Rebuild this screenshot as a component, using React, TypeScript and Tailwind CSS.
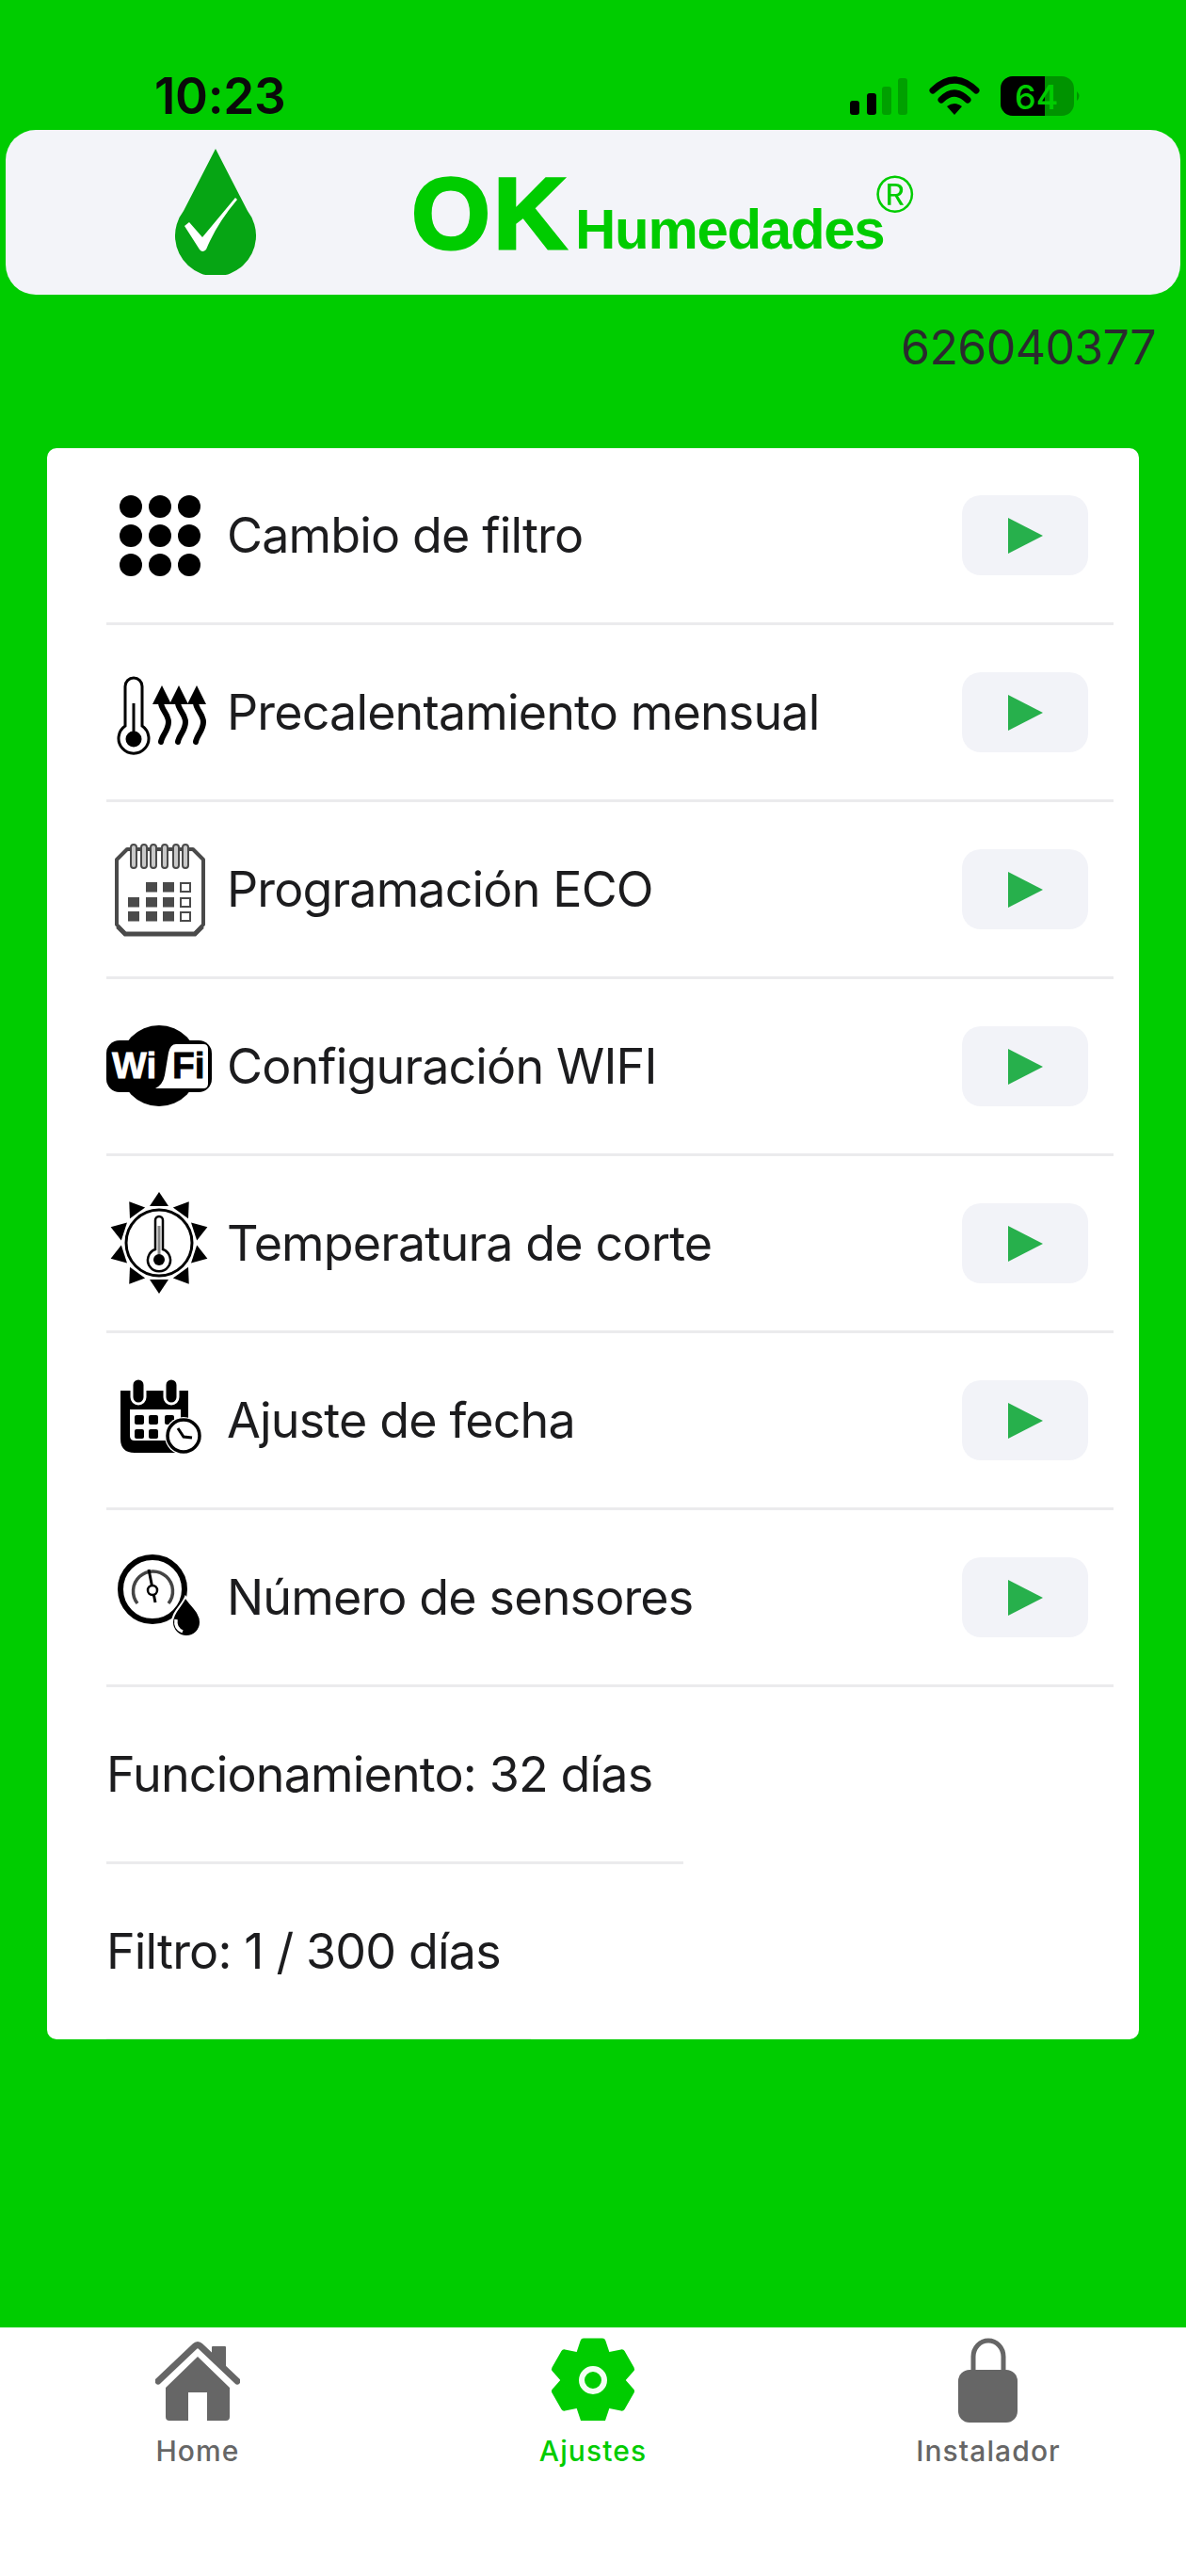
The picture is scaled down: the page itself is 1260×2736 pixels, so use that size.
import React from "react";

const rows = [
  "Cambio de filtro",
  "Precalentamiento mensual",
  "Programación ECO",
  "Configuración WIFI",
  "Temperatura de corte",
  "Ajuste de fecha",
  "Número de sensores",
];

function Dots() {
  const c = [26, 57, 88];
  return (
    <svg width="114" height="114" viewBox="0 0 114 114">
      {c.map((y) => c.map((x) => <circle key={`${x}-${y}`} cx={x} cy={y} r="12" fill="#000" />))}
    </svg>
  );
}

function Thermo() {
  return (
    <svg width="114" height="114" viewBox="0 0 114 114" fill="none">
      <path d="M20 71V29a9 9 0 0 1 18 0V71a16 16 0 1 1-18 0Z" stroke="#000" strokeWidth="3" />
      <path d="M29 47v37" stroke="#000" strokeWidth="3" />
      <circle cx="29" cy="85" r="8.5" fill="#000" />
      {[59, 77, 96].map((x) => (
        <g key={x}>
          <path d={`M${x - 10} 48 L${x} 28 L${x + 10} 48Z`} fill="#000" />
          <path d={`M${x - 1} 46c0 8 8 12 8 21s-7 14-8 21`} stroke="#000" strokeWidth="6" strokeLinecap="round" />
        </g>
      ))}
    </svg>
  );
}

function Calendar() {
  const cols = [23, 42, 60, 78];
  const ys = [49, 65, 80];
  const cells: [number, number, boolean][] = [];
  ys.forEach((y, r) =>
    cols.forEach((x, c) => {
      if (!(r === 0 && c === 0)) cells.push([x, y, c === 3]);
    }),
  );
  return (
    <svg width="114" height="114" viewBox="0 0 114 114" fill="none">
      <path d="M22 14h70l11 11v69l-9 10H20l-9-10V25Z" fill="#fff" stroke="#4a4a4a" strokeWidth="4" strokeLinejoin="round" />
      <path d="M12 96l8 8h74l8-8" stroke="#4a4a4a" strokeWidth="5" />
      {[29, 40, 50, 62, 74, 84].map((x) => (
        <rect key={x} x={x - 3} y="9" width="6" height="25" rx="3" fill="#c9c9c9" stroke="#4a4a4a" strokeWidth="2" />
      ))}
      {cells.map(([x, y, o]) =>
        o ? (
          <rect key={`${x}-${y}`} x={x + 1} y={y + 1} width="10" height="9" fill="#fff" stroke="#4a4a4a" strokeWidth="2" />
        ) : (
          <rect key={`${x}-${y}`} x={x} y={y} width="12" height="10.5" fill="#4a4a4a" />
        ),
      )}
    </svg>
  );
}

function Wifi() {
  return (
    <svg width="114" height="114" viewBox="0 0 114 114">
      <ellipse cx="56" cy="56" rx="42" ry="43" fill="#000" />
      <rect x="0" y="29" width="112" height="55" rx="14" fill="#000" />
      <path d="M74 33H103Q108 33 108 38V75Q108 80 103 80H52Q60 76 62 66L66 42Q68 33 74 33Z" fill="#fff" />
      <text x="6" y="69" fontFamily="'Liberation Sans', sans-serif" fontWeight="700" fontSize="39" fill="#fff" stroke="#fff" strokeWidth="0.8">Wi</text>
      <text x="70" y="69" fontFamily="'Liberation Sans', sans-serif" fontWeight="700" fontSize="39" fill="#000" stroke="#000" strokeWidth="0.8">Fi</text>
    </svg>
  );
}

function Sun() {
  const rays = [0, 1, 2, 3, 4, 5, 6, 7, 8, 9];
  return (
    <svg width="114" height="114" viewBox="0 0 114 114" fill="none">
      {rays.map((i) => (
        <path key={i} d="M56 2 L66 17 L46 17Z" fill="#000" transform={`rotate(${i * 36} 56 56)`} />
      ))}
      <circle cx="56" cy="56" r="35" fill="#fff" stroke="#000" strokeWidth="3" />
      <path d="M52 63V32a4 4 0 0 1 8 0V63a12 12 0 1 1-8 0Z" stroke="#000" strokeWidth="2.5" />
      <path d="M56 38v32" stroke="#888" strokeWidth="3" />
      <circle cx="56" cy="74" r="6" fill="#000" />
    </svg>
  );
}

function DateIcon() {
  return (
    <svg width="114" height="114" viewBox="0 0 114 114" fill="none">
      <path d="M15 25H87V70H80V91H30Q15 91 15 76Z" fill="#000" />
      <path d="M25 45H79V78H30Q25 78 25 73Z" fill="#fff" />
      {[34, 69].map((x) => (
        <rect key={x} x={x - 7} y="12" width="14" height="27" rx="7" fill="#000" stroke="#fff" strokeWidth="3" />
      ))}
      {[30, 45, 62].map((x) => (
        <rect key={`a${x}`} x={x} y="51" width="10" height="10" rx="2" fill="#000" />
      ))}
      {[30, 45].map((x) => (
        <rect key={`b${x}`} x={x} y="66" width="10" height="10" rx="2" fill="#000" />
      ))}
      <circle cx="82" cy="73" r="20" fill="#fff" />
      <circle cx="82" cy="73" r="17" fill="#fff" stroke="#000" strokeWidth="3.5" />
      <path d="M76 65l6 9 9 1" stroke="#000" strokeWidth="3" />
    </svg>
  );
}

function Sensor() {
  return (
    <svg width="114" height="114" viewBox="0 0 114 114" fill="none">
      <circle cx="49" cy="48" r="34" stroke="#000" strokeWidth="6" />
      <path d="M33 63a21 21 0 1 1 33 0" stroke="#444" strokeWidth="3.5" />
      <path d="M45 27l7 35" stroke="#000" strokeWidth="3" />
      <circle cx="49" cy="49" r="5" fill="#fff" stroke="#000" strokeWidth="2.5" />
      <path d="M84 56c6 10 16 16 16 27a15 15 0 0 1-30 0c0-11 10-17 14-27Z" fill="#000" stroke="#fff" strokeWidth="2" />
      <path d="M74 80c-1 7 2 11 7 13" stroke="#fff" strokeWidth="3.5" />
    </svg>
  );
}

const icons = [Dots, Thermo, Calendar, Wifi, Sun, DateIcon, Sensor];

function Row({ label, Icon }: { label: string; Icon: () => React.ReactElement }) {
  return (
    <div className="mr-[27px] flex h-[188px] shrink-0 items-center border-b-[3px] border-[#ebebed] pr-[27px]">
      <div className="flex w-[128px] shrink-0 items-center justify-start">
        <Icon />
      </div>
      <span className="flex-1 text-[52px] tracking-[-0.85px] text-[#1c1c1e]">{label}</span>
      <button className="flex h-[85px] w-[134px] items-center justify-center rounded-[20px] bg-[#f2f3f8]">
        <svg width="40" height="40" viewBox="0 0 40 40">
          <path d="M2 1 L39 20 L2 39Z" fill="#27b04c" />
        </svg>
      </button>
    </div>
  );
}

function Home() {
  return (
    <svg width="90" height="90" viewBox="0 0 90 90" fill="#666">
      <path d="M60 12q0-1 1-1h13q1 0 1 1v24l-15-14Z" />
      <path d="M3 48 L42 11 Q45 8 48 11 L87 48" fill="none" stroke="#666" strokeWidth="7" strokeLinecap="round" />
      <path d="M45 22 L79 55 V86q0 4-4 4H55V60H35V90H15q-4 0-4-4V55Z" />
    </svg>
  );
}

function Gear() {
  const teeth = [0, 60, 120, 180, 240, 300];
  return (
    <svg width="90" height="90" viewBox="0 0 90 90">
      {teeth.map((r) => (
        <path key={r} d="M29 24L35 6H55L61 24Z" fill="#00cc00" stroke="#00cc00" strokeWidth="7" strokeLinejoin="round" transform={`rotate(${r} 45 47)`} />
      ))}
      <circle cx="45" cy="47" r="31" fill="#00cc00" />
      <circle cx="45" cy="47" r="12" fill="none" stroke="#f2fff2" strokeWidth="6" />
    </svg>
  );
}

function Lock() {
  return (
    <svg width="90" height="94" viewBox="0 0 90 94" fill="none">
      <path d="M29 40V24a16 17 0 0 1 32 0V40" stroke="#666" strokeWidth="5" />
      <rect x="13" y="38" width="63" height="56" rx="12" fill="#666" />
    </svg>
  );
}

function Tab({ icon, label, active }: { icon: React.ReactNode; label: string; active?: boolean }) {
  return (
    <div className="flex flex-1 flex-col items-center">
      <div className="flex h-[92px] items-center justify-center">{icon}</div>
      <span className={`mt-[13px] text-[30px] font-medium leading-[36px] tracking-[1.1px] ${active ? "text-[#00cc00]" : "text-[#666666]"}`}>{label}</span>
    </div>
  );
}

export default function App() {
  return (
    <div className="flex h-[2736px] w-[1260px] flex-col overflow-hidden bg-[#00cc00] font-['Inter','Liberation_Sans',sans-serif]">
      <div className="flex h-[138px] shrink-0 items-end justify-between pb-[6px] pl-[164px] pr-[111px]">
        <span className="text-[53px] font-semibold leading-[60px] tracking-[-0.3px] text-[#0a0a0a]">10:23</span>
        <svg width="246" height="50" viewBox="0 0 246 50" className="mb-[3px]">
          <rect x="0" y="28" width="10" height="15" rx="3" fill="#000" />
          <rect x="18" y="20" width="10" height="23" rx="3" fill="#000" />
          <rect x="34" y="13" width="10" height="30" rx="3" fill="#00a000" />
          <rect x="51" y="4" width="10" height="39" rx="3" fill="#00a000" />
          <path d="M88 17 Q111 -5 134 17" fill="none" stroke="#000" strokeWidth="7" strokeLinecap="round" />
          <path d="M97 27 Q111 13 125 27" fill="none" stroke="#000" strokeWidth="7" strokeLinecap="round" />
          <path d="M103 34 Q111 28 119 34 L111 43Z" fill="#000" />
          <rect x="160" y="2" width="78" height="42" rx="13" fill="#009300" />
          <path d="M173 2H207V44H173a13 13 0 0 1-13-13V15a13 13 0 0 1 13-13Z" fill="#000" />
          <path d="M241 18q5 5 0 10Z" fill="#009300" />
          <text x="175" y="37" fontFamily="Inter, sans-serif" fontWeight="500" fontSize="36" fill="#00cc00">64</text>
        </svg>
      </div>

      <div className="mx-[6px] flex h-[175px] shrink-0 items-start rounded-[32px] bg-[#f3f4f9]">
        <svg width="86" height="134" viewBox="0 0 86 134" className="ml-[180px] mt-[20px] shrink-0">
          <path d="M43 0 L77 66 A43 43 0 1 1 9 66 Z" fill="#06a514" />
          <path d="M10 82 L15 78 L29 94 L64 52 L66 54 Q44 80 33 107 Q29 111 26 107 Z" fill="#fff" />
        </svg>
        <div className="ml-[165px] mt-[44px] flex items-baseline font-['Liberation_Sans',sans-serif] font-bold text-[#00cc00]">
          <span className="text-[108px] leading-[90px] tracking-[3px] [-webkit-text-stroke:3px_#00cc00]">OK</span>
          <span className="ml-[6px] text-[60px] leading-[60px] tracking-[-1.3px]">Humedades</span>
          <span className="-ml-[9px] self-start text-[55px] font-normal leading-[50px]">®</span>
        </div>
      </div>

      <div className="mt-[26px] shrink-0 pr-[32px] text-right text-[50px] leading-[60px] tracking-[-0.6px] text-[#2a2a2e]">626040377</div>

      <div className="mx-[50px] mt-[77px] flex h-[1690px] shrink-0 flex-col overflow-hidden rounded-[10px] bg-white pl-[63px]">
        {rows.map((r, i) => (
          <Row key={r} label={r} Icon={icons[i]} />
        ))}
        <div className="flex h-[188px] w-[613px] shrink-0 items-center border-b-[3px] border-[#ebebed] text-[52px] tracking-[-0.85px] text-[#1c1c1e]">
          Funcionamiento: 32 días
        </div>
        <div className="flex h-[188px] w-[451px] shrink-0 items-center border-b-[3px] border-[#ebebed] text-[52px] tracking-[-0.85px] text-[#1c1c1e]">
          Filtro: 1 / 300 días
        </div>
      </div>

      <div className="mt-auto flex h-[264px] shrink-0 items-start bg-white pt-[8px]">
        <Tab icon={<Home />} label="Home" />
        <Tab icon={<Gear />} label="Ajustes" active />
        <Tab icon={<Lock />} label="Instalador" />
      </div>
    </div>
  );
}
